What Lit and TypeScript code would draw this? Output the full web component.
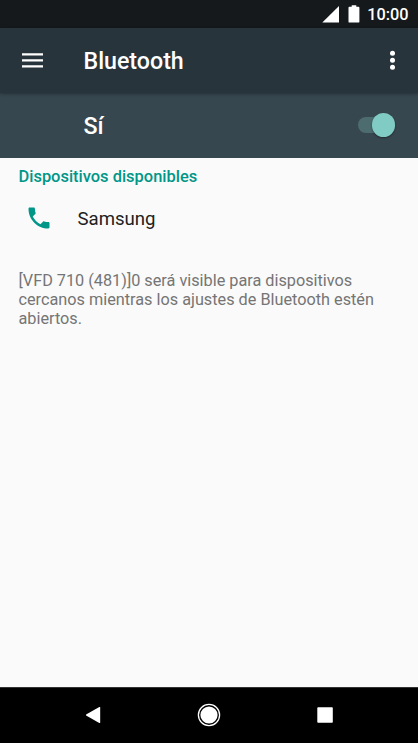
import { LitElement, html, css } from "lit";
import { customElement, property } from "lit/decorators.js";

@customElement("status-bar")
class StatusBar extends LitElement {
  static styles = css`
    :host {
      display: flex;
      box-sizing: border-box;
      height: 28px;
      flex: none;
      justify-content: flex-end;
      align-items: center;
      padding-right: 9.5px;
      background: #15191b;
      color: #fff;
    }
    svg { display: block; fill: #fff; }
    .signal { margin-right: 9px; }
    .battery { margin-right: 7.5px; }
    .clock { font-size: 16.3px; line-height: 28px; font-weight: 500; padding-top: 1px; }
  `;
  render() {
    return html`
      <svg class="signal" width="17" height="17" viewBox="0 0 17 17"><path d="M17 0V16.5H0.3z" /></svg>
      <svg class="battery" width="12" height="18" viewBox="0 0 12 18">
        <path d="M3.7 0.3h4.6v1.5h2.2q.9 0 .9.9v14q0 .9-.9.9H1.4q-.9 0-.9-.9V2.700q0-.9.9-.9h2.300z" />
      </svg>
      <span class="clock">10:00</span>
    `;
  }
}

@customElement("app-bar")
class AppBar extends LitElement {
  @property() heading = "";
  static styles = css`
    :host {
      display: flex;
      box-sizing: border-box;
      height: 65px;
      flex: none;
      align-items: center;
      padding: 0 22px;
      background: #28343b;
      color: #fff;
      box-shadow: 0 1px 3px rgba(0, 0, 0, 0.35);
      z-index: 1;
    }
    svg { display: block; fill: #fff; }
    .menu { margin-right: 40.5px; }
    .title { flex: 1; font-size: 23.2px; font-weight: 500; line-height: 30px; padding-top: 1px; }
  `;
  render() {
    return html`
      <svg class="menu" width="21" height="17" viewBox="0 0 21 17">
        <path d="M0 1.200h21v2.400H0zM0 7.200h21v2.400H0zM0 13.200h21v2.400H0z" />
      </svg>
      <span class="title">${this.heading}</span>
      <svg width="7" height="21" viewBox="0 0 7 21">
        <circle cx="3.500" cy="3.300" r="2.500" /><circle cx="3.500" cy="10.300" r="2.500" /><circle cx="3.500" cy="17.300" r="2.500" />
      </svg>
    `;
  }
}

@customElement("switch-bar")
class SwitchBar extends LitElement {
  @property() label = "";
  static styles = css`
    :host {
      display: flex;
      box-sizing: border-box;
      height: 65px;
      flex: none;
      align-items: center;
      justify-content: space-between;
      padding: 0 23px 0 83.5px;
      background: #37474f;
      color: #fff;
    }
    .label { font-size: 23.2px; font-weight: 500; line-height: 30px; padding-top: 1px; }
    .track {
      display: flex;
      align-items: center;
      justify-content: flex-end;
      width: 37px;
      height: 16px;
      margin-bottom: 1px;
      border-radius: 8px;
      background: linear-gradient(90deg, #4d6c70 30px, transparent 30px);
    }
    .thumb {
      width: 23.5px;
      height: 23.5px;
      flex: none;
      border-radius: 50%;
      background: #80cbc4;
      box-shadow: 0 1px 2px rgba(0, 0, 0, 0.4);
    }
  `;
  render() {
    return html`
      <span class="label">${this.label}</span>
      <div class="track"><div class="thumb"></div></div>
    `;
  }
}

@customElement("nav-bar")
class NavBar extends LitElement {
  static styles = css`
    :host {
      display: flex;
      box-sizing: border-box;
      height: 56px;
      flex: none;
      align-items: center;
      justify-content: center;
      gap: 92px;
      padding-bottom: 1px;
      border-top: 1px solid #333;
      background: #000;
    }
    svg { display: block; fill: #fff; }
  `;
  render() {
    return html`
      <svg width="24" height="24" viewBox="0 0 24 24"><path d="M5 12Q5 11.500 5.500 11.200L18.300 4Q19.200 3.700 19.200 4.500V19.500Q19.200 20.300 18.300 20L5.500 12.800Q5 12.500 5 12z" /></svg>
      <svg width="24" height="24" viewBox="0 0 24 24">
        <circle cx="12" cy="12" r="10.600" fill="none" stroke="#fff" stroke-width="1.300" />
        <circle cx="12" cy="12" r="8.600" />
      </svg>
      <svg width="24" height="24" viewBox="0 0 24 24"><rect x="4.300" y="4.300" width="15.500" height="15.500" rx="0.800" /></svg>
    `;
  }
}

@customElement("app-root")
class AppRoot extends LitElement {
  static styles = css`
    :host {
      display: flex;
      flex-direction: column;
      height: 743px;
      overflow: hidden;
      background: #fafafa;
      font-family: Roboto, sans-serif;
    }
    main { flex: 1; padding: 9px 18.5px 0; }
    .section { font-size: 16.450px; line-height: 20px; font-weight: 500; color: #009688; }
    .device { display: flex; align-items: center; height: 28px; margin-top: 17px; padding-left: 6.5px; }
    .call { display: block; fill: #009688; }
    .name { margin-left: 24.5px; padding-top: 2px; font-size: 18.600px; color: #212121; }
    .note { margin: 39px 0 0; font-size: 16.250px; line-height: 19px; color: #757575; }
    .line { display: block; white-space: nowrap; }
  `;
  private note = [
    "[VFD 710 (481)]0 será visible para dispositivos",
    "cercanos mientras los ajustes de Bluetooth estén",
    "abiertos.",
  ];
  render() {
    return html`
      <status-bar></status-bar>
      <app-bar heading="Bluetooth"></app-bar>
      <switch-bar label="Sí"></switch-bar>
      <main>
        <div class="section">Dispositivos disponibles</div>
        <div class="device">
          <svg class="call" width="28" height="28" viewBox="0 0 24 24">
            <path d="M6.620 10.790c1.440 2.830 3.760 5.140 6.590 6.590l2.200-2.200c.27-.27.67-.36 1.020-.24 1.120.37 2.330.57 3.570.57.55 0 1 .45 1 1V20c0 .55-.45 1-1 1-9.390 0-17-7.610-17-17 0-.55.45-1 1-1h3.500c.55 0 1 .45 1 1 0 1.250.2 2.450.57 3.570.11.35.03.74-.25 1.020z" />
          </svg>
          <span class="name">Samsung</span>
        </div>
        <p class="note">${this.note.map((t) => html`<span class="line">${t}</span>`)}</p>
      </main>
      <nav-bar></nav-bar>
    `;
  }
}
